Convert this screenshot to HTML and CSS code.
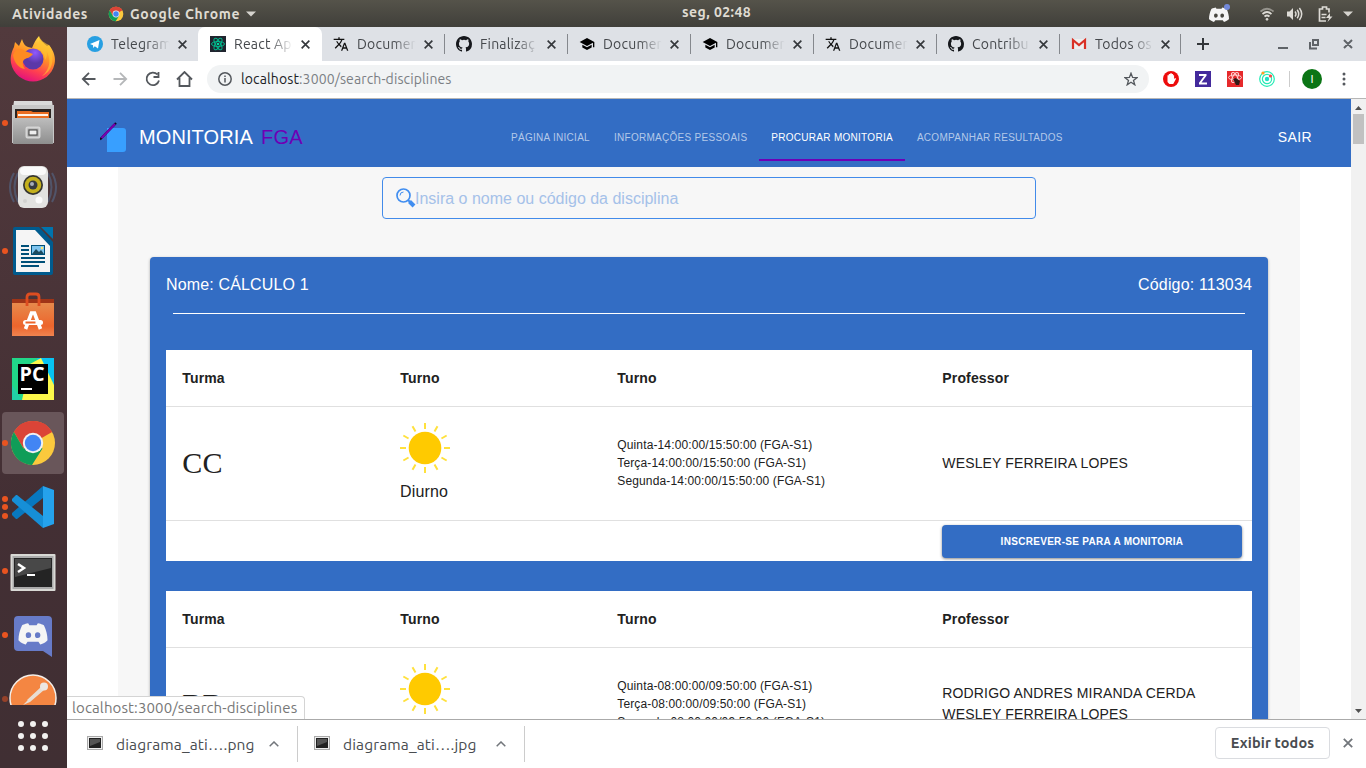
FILE: index.html
```html
<!DOCTYPE html>
<html lang="pt-BR">
<head>
<meta charset="utf-8">
<title>Monitoria FGA</title>
<link rel="stylesheet" href="styles.css">
</head>
<body>
<svg width="0" height="0" class="defs">
  <symbol id="chrome" viewBox="0 0 48 48">
    <circle cx="24" cy="24" r="22" fill="#fbc93d"/>
    <path d="M24 24 4.900 13A22 22 0 0 1 43.100 13Z" fill="#db4437"/>
    <path d="M24 13H43.100A22 22 0 0 0 4.900 13L14.500 29.500Z" fill="#db4437"/>
    <path d="M4.900 13A22 22 0 0 0 23 46L33.500 29.500 24 24 14.500 29.500Z" fill="#0f9d58"/>
    <circle cx="24" cy="24" r="10.200" fill="#f1f1f1"/><circle cx="24" cy="24" r="8.200" fill="#4285f4"/>
  </symbol>
  <symbol id="close" viewBox="0 0 10 10"><path d="M1.500 1.500 8.500 8.500M8.500 1.500 1.500 8.500" stroke="currentColor" stroke-width="1.500"/></symbol>
  <symbol id="translate" viewBox="0 0 24 24"><path fill="#111" d="M12.870 15.070l-2.540-2.510.030-.030A17.520 17.520 0 0 0 14.070 6H17V4h-7V2H8v2H1v2h11.170C11.500 7.920 10.440 9.750 9 11.350 8.070 10.320 7.300 9.190 6.690 8h-2c.730 1.630 1.730 3.170 2.980 4.560l-5.090 5.020L4 19l5-5 3.110 3.110zM18.500 10h-2L12 22h2l1.120-3h4.750L21 22h2zm-2.620 7l1.620-4.330L19.120 17z"/></symbol>
  <symbol id="github" viewBox="0 0 16 16"><path fill="#16181c" d="M8 0C3.580 0 0 3.580 0 8c0 3.540 2.290 6.530 5.470 7.590.4.070.550-.170.550-.380v-1.490c-2.010.370-2.530-.490-2.690-.940-.090-.230-.480-.940-.820-1.130-.280-.150-.680-.520-.010-.530.630-.010 1.080.580 1.230.820.720 1.210 1.870.870 2.330.660.070-.520.280-.870.510-1.070-1.780-.200-3.640-.890-3.640-3.950 0-.870.310-1.590.820-2.150-.080-.200-.360-1.020.080-2.120 0 0 .670-.210 2.200.820a7.600 7.600 0 0 1 4 0c1.530-1.040 2.200-.820 2.200-.820.440 1.100.160 1.920.080 2.120.510.560.820 1.270.820 2.150 0 3.070-1.870 3.750-3.650 3.950.290.250.540.730.540 1.480v2.200c0 .210.150.460.550.380A8.010 8.010 0 0 0 16 8c0-4.420-3.580-8-8-8z"/></symbol>
  <symbol id="school" viewBox="0 0 24 24"><path fill="#000" d="M5 13.180v4L12 21l7-3.820v-4L12 17zM12 3 1 9l11 6 9-4.910V17h2V9z"/></symbol>
  <symbol id="discord" viewBox="0 0 24 19"><path fill="#f5f5f5" fill-rule="evenodd" d="M8 1C5 1.500 3 2.600 3 2.600 1 6.500 0 11 0 15c2 2.500 6 3.500 6 3.500l1.500-2.200h9L18 18.500s4-1 6-3.500c0-4-1-8.500-3-12.400C21 2.600 19 1.500 16 1l-1 1.700H9zM8.200 8.400a2.200 2.400 0 1 0 .1 4.900 2.200 2.400 0 0 0-.1-4.900zm7.600 0a2.200 2.400 0 1 0 .1 4.900 2.200 2.400 0 0 0-.1-4.900z"/></symbol>
  <symbol id="sun" viewBox="0 0 50 50"><circle cx="25" cy="25" r="16.300" fill="#ffca00"/>
    <g stroke="#ffe13d" stroke-width="2"><path id="ray" d="M25 0v6M25 44v6"/><use href="#ray" transform="rotate(30 25 25)"/><use href="#ray" transform="rotate(60 25 25)"/><use href="#ray" transform="rotate(90 25 25)"/><use href="#ray" transform="rotate(120 25 25)"/><use href="#ray" transform="rotate(150 25 25)"/></g></symbol>
  <symbol id="thumb" viewBox="0 0 16 14"><rect x=".5" y=".5" width="15" height="13" fill="#eee" stroke="#aaa"/><rect x="2" y="2" width="12" height="10" fill="#222"/><path d="M3 3h10v3L3 10z" fill="#555"/></symbol>
  <symbol id="chev" viewBox="0 0 10 6"><path d="M.700 5.300 5 1l4.300 4.300" fill="none" stroke="#72767b" stroke-width="1.500"/></symbol>
</svg>

<header class="topbar">
  <span class="activities">Atividades</span>
  <svg class="i16" ><use href="#chrome"/></svg>
  <span class="appname">Google Chrome</span>
  <svg width="10" height="6"><path d="M0 .500H10L5 5.500z" fill="#d5d3ce"/></svg>
  <span class="clock">seg, 02:48</span>
  <div class="tray">
    <svg width="22" height="20" viewBox="0 0 22 20"><use href="#discord" x="0" y="3.500" width="20" height="16"/><circle cx="18" cy="4" r="3" fill="#7289da"/></svg>
    <svg class="wifi" width="14" height="14" viewBox="0 0 14 14" fill="none" stroke="#dddbd6" stroke-width="1.700"><path d="M.500 4.500Q7-1 13.500 4.500" opacity=".5"/><path d="M2.500 7Q7 3 11.500 7M4.500 9.500Q7 7.500 9.500 9.500"/><circle cx="7" cy="12.300" r="1" fill="#dddbd6" stroke-width=".8"/></svg>
    <svg class="vol" width="16" height="14" viewBox="0 0 16 14" fill="none" stroke="#dddbd6" stroke-width="1.500"><path d="M0 4.500h2.500L6 1v12L2.500 9.500H0z" fill="#dddbd6" stroke="none"/><path d="M8 4.500Q10 7 8 9.500M10.200 2.800Q13.200 7 10.200 11.200M12.400 1Q17 7 12.400 13"/></svg>
    <svg class="bat" width="15" height="16" viewBox="0 0 15 16" fill="none" stroke="#dddbd6" stroke-width="1.700"><path d="M11 6.500V3H8.500V1h-4v2H1.500v12H8M3.500 8.500h5M3.500 11.500h4"/><path d="m12 7-4 5h3l-1.500 4 5-5.500H12z" fill="#dddbd6" stroke="none"/></svg>
    <svg width="10" height="6"><path d="M0 .500H10L5 5.500z" fill="#d5d3ce"/></svg>
  </div>
</header>

<div class="desktop">
<aside class="dock">
  <div class="app"><svg viewBox="0 0 48 48">
    <defs><linearGradient id="ff" x1=".8" y1="0" x2=".4" y2="1"><stop offset="0" stop-color="#ffe84a"/><stop offset=".45" stop-color="#ff9326"/><stop offset=".75" stop-color="#ff4050"/><stop offset="1" stop-color="#e3127c"/></linearGradient><radialGradient id="fp" cx=".6" cy=".2"><stop offset="0" stop-color="#9059ff"/><stop offset="1" stop-color="#5b38a8"/></radialGradient></defs>
    <path d="M30 1c1 5 5 7 8 10l2-1c5 6 7 13 5.500 19C43 40 34 46.500 24 46.500S4 39 2 28c-1-7 1-12 3-16l1-5 4 4 3-7c1 4 3 7 6 8l4 1c2-5 4-9 7-12z" fill="url(#ff)"/>
    <circle cx="24" cy="24" r="10.500" fill="url(#fp)"/><path d="M4 20c3-7 7-8 12-4l8 3c-3 4-6 4-8 5-3 2-3 6 0 10-7-1-11-7-12-14z" fill="#ff8b22"/><path d="M30 1c2 10-5 10-6 12 7 0 12 5 12 12 3-4 2-8 1-10 5 8 5 19-4 26 10-4 14-17 7-31-4-2-8-4-10-9z" fill="#ffc330" opacity=".65"/></svg></div>
  <div class="app"><i></i><svg viewBox="0 0 48 48"><defs><linearGradient id="gr" x2="0" y2="1"><stop stop-color="#bdbdbd"/><stop offset="1" stop-color="#8e8e8e"/></linearGradient></defs><path d="M5 2h38l2 14H3z" fill="#dadada"/><path d="M3 6h42v38H3z" fill="#c7c7c7"/><path d="M6 10h36v10H6z" fill="#2b2421"/><path d="M8 12h14l2 1h16v7H8z" fill="#ea6d22"/><path d="M9 15h30v2H9z" fill="#fff3e8"/><path d="M4 19h40v26H4z" fill="url(#gr)"/><rect x="17.500" y="28.500" width="13" height="10" rx="1" fill="none" stroke="#d5d5d5" stroke-width="2"/><rect x="20" y="31" width="8" height="5" fill="#eee" stroke="#444"/></svg></div>
  <div class="app"><svg viewBox="0 0 48 48"><g fill="none" stroke="#52617e" stroke-width="2" opacity=".7"><path d="M5 10Q-3 24 5 39M43 10Q51 24 43 39M9 10Q2 24 9 39M39 10Q46 24 39 39"/></g><rect x="9" y="3" width="30" height="42" rx="6" fill="#e2e2e0"/><rect x="11" y="4" width="26" height="8" rx="4" fill="#fafafa"/><circle cx="24" cy="22" r="10" fill="#353530"/><circle cx="24" cy="22" r="8.300" fill="#c4b01d"/><circle cx="24" cy="22" r="4.500" fill="#343941"/><circle cx="23" cy="21" r="2" fill="#a5adba"/><circle cx="30" cy="37" r="3.500" fill="#fafafa"/><circle cx="16" cy="38" r="2" fill="#d2d2d0"/></svg></div>
  <div class="app"><i></i><svg viewBox="0 0 48 48"><path d="M6 0h24l14 15v31q0 2-2 2H6q-2 0-2-2V2q0-2 2-2z" fill="#005b8e"/><path d="M7 3h19l15 16v26H7z" fill="#f5f5f5"/><path d="M32 0h12v12z" fill="#0074ad"/><path d="M12 18h8v2h-8zm0 4h8v2h-8zm0 4h8v2h-8zm0 4h24v2H12zm0 4h24v2H12zm0 4h18v2H12z" fill="#005078"/><path d="M22 18h14v10H22z" fill="#005078"/><path d="M23 19h12v8H23z" fill="#7ec4ee"/><path d="m23 27 4-5 3 3 2-2 3 4z" fill="#1d4b5f"/><circle cx="33" cy="21" r="1.200" fill="#ffe76b"/></svg></div>
  <div class="app"><svg viewBox="0 0 48 48"><defs><linearGradient id="bag" x2="0" y2="1"><stop stop-color="#e68a4c"/><stop offset=".7" stop-color="#ed652c"/><stop offset="1" stop-color="#f08450"/></linearGradient></defs><path d="M3 8h42v12H3z" fill="#9f3417"/><path d="M3 12h42v33H3z" fill="url(#bag)"/><path d="M18 15V6q0-3 3-3h6q3 0 3 3v9" fill="none" stroke="#dd4d20" stroke-width="2.800"/><path d="M16.500 38 22.500 22h3l6 16" fill="none" stroke="#fff" stroke-width="3.600"/><rect x="14" y="29" width="20" height="5" rx="2.500" fill="#fff"/><path d="M16.500 31.500h10" stroke="#ed652c" stroke-width="2"/></svg></div>
  <div class="app"><svg viewBox="0 0 48 48"><path d="M3 3h42v42H3z" fill="#21d789"/><path d="M28 3h17v31L32 20z" fill="#07c3f2"/><path d="M21 9 32 3l13 27v15H13z" fill="#fcf84a"/><path d="M3 30 13 45H3z" fill="#21cfa8"/><path d="M9 9h30v30H9z" fill="#000"/><path d="M12 33h11v2H12z" fill="#fff"/><text x="10.500" y="26" class="pc" textLength="25" lengthAdjust="spacingAndGlyphs">PC</text></svg></div>
  <div class="app on"><i></i><svg viewBox="0 0 48 48"><use href="#chrome" width="48" height="48"/></svg></div>
  <div class="app"><b><i></i><i></i><i></i></b><svg viewBox="0 0 48 48"><path d="m34 3 11 4v34l-11 4z" fill="#25a2ec"/><path d="M34 3v12L8 36H7l-4-4v-2z" fill="#0878bf"/><path d="M34 45V33L8 12H7l-4 4v2z" fill="#168fd7"/></svg></div>
  <div class="app"><i></i><svg viewBox="0 0 48 48"><rect x="1.500" y="7" width="45" height="37" rx="1" fill="#d9d9d5"/><rect x="3.500" y="9" width="41" height="33" fill="#aaa"/><path d="M5 11h38v29H5z" fill="#242424"/><path d="M6 12h36v9L6 30z" fill="#484848"/><path d="m9 17 6 4-6 4" fill="none" stroke="#fff" stroke-width="2.500"/><path d="M18 27h8v2h-8z" fill="#fff"/></svg></div>
  <div class="app"><i></i><svg viewBox="0 0 48 48"><path d="M9 5h30q4 0 4 4v37l-9-6H9q-4 0-4-4V9q0-4 4-4z" fill="#677bc8"/><use href="#discord" x="9" y="11" width="30" height="23"/></svg></div>
  <div class="app cut"><i></i><svg viewBox="0 0 48 48"><circle cx="24" cy="24" r="23" fill="#f48642" stroke="#f3eee9" stroke-width="1.500"/><path d="m18 26 14-13 3 3-14 12zM14 31l5-5 2 2z" fill="#e8ddd2"/><circle cx="35" cy="12.500" r="4" fill="#ece6e1"/></svg></div>
  <svg class="grid" width="30" height="30" viewBox="0 0 30 30" fill="none" stroke="#f2f1f0" stroke-width="6" stroke-linecap="round"><path d="M3 3h0M15 3h0M27 3h0M3 15h0M15 15h0M27 15h0M3 27h0M15 27h0M27 27h0"/></svg>
</aside>

<main class="window">
  <nav class="tabs">
    <div class="tab"><svg class="fav" viewBox="0 0 16 16"><circle cx="8" cy="8" r="8" fill="#279fe2"/><path d="m3 8 9.500-4L11 12.500 7.800 10.200 6.200 12 6 9.200z" fill="#fff"/></svg><span>Telegram</span><svg class="x"><use href="#close"/></svg></div>
    <div class="tab active"><svg class="fav" viewBox="0 0 16 16"><path d="M0 0h16v16H0z" fill="#20252f"/><g fill="none" stroke="#00b98c"><ellipse cx="8" cy="8" rx="6.500" ry="2.500"/><ellipse cx="8" cy="8" rx="6.500" ry="2.500" transform="rotate(60 8 8)"/><ellipse cx="8" cy="8" rx="6.500" ry="2.500" transform="rotate(120 8 8)"/></g><circle cx="8" cy="8" r="1.300" fill="#00d8a0"/></svg><span>React Ap</span><svg class="x"><use href="#close"/></svg></div>
    <div class="tab"><svg class="fav"><use href="#translate"/></svg><span>Documen</span><svg class="x"><use href="#close"/></svg></div>
    <div class="tab sep"><svg class="fav"><use href="#github"/></svg><span>Finalizaç</span><svg class="x"><use href="#close"/></svg></div>
    <div class="tab sep"><svg class="fav"><use href="#school"/></svg><span>Documen</span><svg class="x"><use href="#close"/></svg></div>
    <div class="tab sep"><svg class="fav"><use href="#school"/></svg><span>Documen</span><svg class="x"><use href="#close"/></svg></div>
    <div class="tab sep"><svg class="fav"><use href="#translate"/></svg><span>Documen</span><svg class="x"><use href="#close"/></svg></div>
    <div class="tab sep"><svg class="fav"><use href="#github"/></svg><span>Contribu</span><svg class="x"><use href="#close"/></svg></div>
    <div class="tab sep last"><svg class="fav" viewBox="0 0 16 16"><path d="M2 3h12v10H2z" fill="#eee"/><path d="M2 13V4l6 5 6-5v9" fill="none" stroke="#d93025" stroke-width="2.200"/></svg><span>Todos os</span><svg class="x"><use href="#close"/></svg></div>
    <svg class="plus" width="12" height="12"><path d="M6 0v12M0 6h12" stroke="#33363a" stroke-width="2"/></svg>
    <svg class="wins" width="76" height="12" fill="none" stroke="#5f6368" stroke-width="2"><path d="M0 10h10M35 2h5v5h-5zM32 4v6.500h7M66 2l8 8M74 2l-8 8"/></svg>
  </nav>
  <div class="toolbar">
    <svg class="navs" width="112" height="16" viewBox="0 0 112 16" fill="none" stroke="#54585d" stroke-width="1.800"><path d="M14.500 8H2M8 1.800 1.800 8 8 14.200"/><path d="M32.500 8H45M39 1.800 45.200 8 39 14.200" stroke="#b5b7b9"/><path d="M76.500 3.500A6.300 6.300 0 1 0 78 9.500M77.500 1v5h-5"/><path d="M96 8.500 103.500 1 111 8.500M98.500 7v8h10V7"/></svg>
    <div class="omnibox">
      <svg width="14" height="14" viewBox="0 0 14 14" fill="none" stroke="#54585d" stroke-width="1.500"><circle cx="7" cy="7" r="6.200"/><path d="M7 6v4.500M7 3.500V5"/></svg>
      <span class="url"><em>localhost</em>:3000/search-disciplines</span>
      <svg class="star" width="14" height="14" viewBox="0 0 14 14"><path d="m7 1.200 1.600 4.200 4.400.2-3.500 2.800 1.300 4.400L7 10.300l-3.800 2.500 1.300-4.400L1 5.600l4.400-.2z" fill="none" stroke="#54585d" stroke-width="1.300"/></svg>
    </div>
    <div class="exts">
      <svg class="i16" viewBox="0 0 16 16"><circle cx="8" cy="8" r="8" fill="#ed0c0c"/><path d="M4.500 8V4.200h1.300V3h1.500v-.8h1.500V3h1.300v1.200h1V8l1-1 1 .8L10.200 13H6.300L4.500 11z" fill="#fff"/></svg>
      <svg class="i16" viewBox="0 0 16 16"><path d="M0 0h16v16H0z" fill="#432a9c"/><path d="M4 4h7.500M4 12.500h8M10.500 4.500 5 12" fill="none" stroke="#fff" stroke-width="1.900"/></svg>
      <svg class="i16" viewBox="0 0 16 16"><path d="M0 0h16v16H0z" fill="#e6292b"/><g fill="none" stroke="#ffd3d0"><ellipse cx="8" cy="6.500" rx="6.500" ry="2.500"/><ellipse cx="8" cy="6.500" rx="5.500" ry="2.300" transform="rotate(60 8 6.500)"/><ellipse cx="8" cy="6.500" rx="5.500" ry="2.300" transform="rotate(120 8 6.500)"/></g><path d="m6 8 3-1 4 3-1 4H9z" fill="#321a17"/></svg>
      <svg class="i16" viewBox="0 0 16 16"><g fill="none" stroke="#24ebb5" stroke-width="1.200"><circle cx="8" cy="8" r="7.300"/><circle cx="8" cy="8" r="4.600"/></g><circle cx="8" cy="8" r="2.200" fill="#20dfc2"/><circle cx="4" cy="2" r="1.600" fill="#ff9f23"/><circle cx="11.500" cy="5" r="1.600" fill="#f44"/></svg>
      <u></u><div class="avatar">I</div>
      <svg width="4" height="14" fill="#54585d"><circle cx="2" cy="2" r="1.500"/><circle cx="2" cy="7" r="1.500"/><circle cx="2" cy="12" r="1.500"/></svg>
    </div>
  </div>
  <div class="viewport">
    <div class="page">
      <div class="navbar">
        <svg class="logo" width="30" height="32" viewBox="0 0 30 32"><path d="M7 7h16q3 0 3 3v18q0 3-3 3H7z" fill="#389fff"/><path d="M0 18.500 16 2" stroke="#140025" stroke-width="2.200"/><path d="M1.500 17 15 3" stroke="#7700b0" stroke-width="2.200"/></svg>
        <span class="brand">MONITORIA</span><span class="fga">FGA</span>
        <div class="links"><a>PÁGINA INICIAL</a><a>INFORMAÇÕES PESSOAIS</a><a class="current">PROCURAR MONITORIA</a><a>ACOMPANHAR RESULTADOS</a></div>
        <span class="exit">SAIR</span>
      </div>
      <div class="container">
        <div class="search"><svg width="20" height="20" viewBox="0 0 20 20" fill="none" stroke="#418ef0"><circle cx="7.500" cy="7.500" r="6.500" stroke-width="1.700"/><path d="M4 7.500A3.500 3.500 0 0 1 7.500 4"/><path d="m12 12 2 2" stroke-width="2"/><path d="m13.500 13.500 4.500 4.500" stroke-width="4"/></svg><span>Insira o nome ou código da disciplina</span></div>
        <section class="card">
          <div class="cardhead"><span>Nome: CÁLCULO 1</span><span>Código: 113034</span></div>
          <div class="rule"></div>
          <div class="table">
            <div class="row head"><div>Turma</div><div>Turno</div><div>Turno</div><div>Professor</div></div>
            <div class="row body"><div class="class">CC</div><div class="shift"><svg width="50" height="50"><use href="#sun"/></svg>Diurno</div><div class="times">Quinta-14:00:00/15:50:00 (FGA-S1)<br>Terça-14:00:00/15:50:00 (FGA-S1)<br>Segunda-14:00:00/15:50:00 (FGA-S1)</div><div>WESLEY FERREIRA LOPES</div></div>
            <div class="action"><div class="button">INSCREVER-SE PARA A MONITORIA</div></div>
          </div>
          <div class="table">
            <div class="row head"><div>Turma</div><div>Turno</div><div>Turno</div><div>Professor</div></div>
            <div class="row body"><div class="class">BB</div><div class="shift"><svg width="50" height="50"><use href="#sun"/></svg></div><div class="times">Quinta-08:00:00/09:50:00 (FGA-S1)<br>Terça-08:00:00/09:50:00 (FGA-S1)<br>Segunda-08:00:00/09:50:00 (FGA-S1)</div><div class="names">RODRIGO ANDRES MIRANDA CERDA<br>WESLEY FERREIRA LOPES</div></div>
          </div>
        </section>
      </div>
    </div>
    <div class="scroll"><svg width="7" height="4"><path d="M0 4 3.500 0 7 4z" fill="#505050"/></svg><div class="handle"></div><svg class="down" width="7" height="4"><path d="M0 0H7L3.500 4z" fill="#505050"/></svg></div>
    <div class="status">localhost:3000/search-disciplines</div>
  </div>
  <footer class="downloads">
    <div class="file"><svg width="16" height="14"><use href="#thumb"/></svg><span>diagrama_ati….png</span><svg width="10" height="6"><use href="#chev"/></svg></div>
    <div class="file"><svg width="16" height="14"><use href="#thumb"/></svg><span>diagrama_ati….jpg</span><svg width="10" height="6"><use href="#chev"/></svg></div>
    <div class="showall">Exibir todos</div>
    <svg class="dx" width="12" height="12"><use href="#close"/></svg>
  </footer>
</main>
</div>
</body>
</html>
```
FILE: styles.css
```css
* { box-sizing: border-box; }
body { margin: 0; width: 1366px; height: 768px; overflow: hidden; font-family: "Liberation Sans", Arial, sans-serif; }
svg { display: block; flex: none; }
.defs { position: absolute; }
.i16 { width: 16px; height: 16px; }
.topbar, .tabs, .url, .status, .downloads { font-family: Ubuntu, "Noto Sans", sans-serif; white-space: nowrap; }

.topbar { height: 27px; position: relative; display: flex; align-items: center; padding-left: 12px; background: linear-gradient(#55534a, #403f3a); color: #dfdbd2; font-size: 14px; font-weight: 600; }
.activities { width: 76px; margin-right: 20px; letter-spacing: .6px; }
.appname { width: 111px; margin: 0 5px 0 6px; letter-spacing: .65px; }
.clock { position: absolute; left: 682px; top: 4px; letter-spacing: .45px; }
.tray { margin-left: auto; width: 157px; height: 27px; display: flex; align-items: center; }
.tray > svg:first-child { margin-top: -1px; }
.wifi { margin-left: 29px; }
.vol { margin-left: 13px; }
.bat { margin: 0 10px 0 15px; }

.desktop { display: flex; height: 741px; }
.dock { width: 67px; background: linear-gradient(#523a3d, #432f34 65%, #402f33); }
.app { height: 64px; display: flex; align-items: center; justify-content: center; position: relative; padding-right: 1px; }
.app svg { width: 48px; height: 48px; }
.app i { position: absolute; left: 2px; width: 6px; height: 6px; border-radius: 50%; background: #e95420; }
.app b { position: absolute; left: 0; height: 23px; width: 8px; display: flex; flex-direction: column; justify-content: space-between; }
.app b i { position: static; margin-left: 2px; }
.app.on { height: 62px; margin: 1px 3px 1px 2px; padding: 0; border-radius: 4px; background: #69565a; }
.app.on i { left: 0; }
.app.cut { height: 38px; align-items: flex-start; padding-top: 7px; overflow: hidden; }
.app.cut i { top: 29px; opacity: .5; }
.pc { font: bold 19px "Open Sans", sans-serif; fill: #fff; }
.grid { margin: 16px 0 0 18px; }

.window { width: 1299px; background: #fff; display: flex; flex-direction: column; }
.tabs { height: 34px; background: #dee1e6; padding-left: 8px; display: flex; align-items: center; color: #45484c; }
.tab { width: 123px; height: 34px; padding-left: 12px; display: flex; align-items: center; position: relative; flex: none; }
.fav { width: 16px; height: 16px; margin-right: 8px; }
.tab span { width: 60px; overflow: hidden; font-size: 14px; letter-spacing: .2px; -webkit-mask-image: linear-gradient(90deg, #000 60%, transparent 98%); mask-image: linear-gradient(90deg, #000 60%, transparent 98%); }
.x { width: 11px; height: 11px; margin-left: 6px; color: #35383c; }
.active { background: #fff; border-radius: 7px 7px 0 0; width: 124px; margin-right: -1px; }
.sep::before { content: ""; position: absolute; left: 0; top: 7px; width: 1px; height: 20px; background: #85888d; }
.last .x { margin-left: 5px; }
.last::after { content: ""; position: absolute; right: 1px; top: 7px; width: 1px; height: 20px; background: #85888d; }
.plus { margin-left: 15px; }
.wins { margin-left: 69px; }
.toolbar { height: 38px; border-bottom: 1px solid #b6b6b6; display: flex; align-items: center; padding: 0 0 1px 14px; }
.omnibox { width: 942px; height: 28px; margin-left: 14px; border-radius: 14px; background: #f1f3f4; display: flex; align-items: center; padding: 0 11px; }
.url { margin: -1px 0 0 9px; font-size: 14px; letter-spacing: .12px; color: #7b7f84; }
.url em { font-style: normal; color: #202124; }
.star { margin-left: auto; }
.exts { display: flex; align-items: center; gap: 16px; margin-left: 14px; }
.exts u { width: 1px; height: 16px; background: #ccc; margin: 0 -4px 0 -2px; }
.avatar { width: 20px; height: 20px; border-radius: 50%; background: #0b7515; color: #fff; text-align: center; font-size: 11px; line-height: 20px; margin-right: 4px; }

.viewport { height: 620px; display: flex; overflow: hidden; position: relative; }
.page { width: 1284px; }
.navbar { height: 68px; background: #336dc4; color: #fff; display: flex; align-items: center; padding: 8px 39px 0 33px; }
.brand { font-size: 20px; margin: 1px 0 0 9px; width: 122px; white-space: nowrap; letter-spacing: .1px; }
.fga { font-size: 20px; margin-top: 1px; color: #6e00b5; width: 60px; letter-spacing: .2px; }
.links { display: flex; height: 48px; margin-left: 178px; font-size: 10px; letter-spacing: .28px; color: #b4c9e9; }
.links a { padding: 0 12px; line-height: 49px; white-space: nowrap; }
.links .current { color: #fff; box-shadow: inset 0 -2px #6d00b7; }
.exit { margin-left: auto; font-size: 14px; letter-spacing: .4px; }
.container { width: 1182px; height: 552px; margin: 0 auto; padding: 10px 32px 0; background: #f7f7f7; }
.search { width: 654px; height: 42px; margin-left: 232px; border: 1px solid #428bea; border-radius: 4px; display: flex; align-items: center; padding-left: 13px; color: #a5c1e9; font-size: 16px; }
.search span { margin: 2px 0 0 -1px; }
.card { height: 720px; margin-top: 38px; padding: 0 16px; background: #336dc4; border-radius: 4px; box-shadow: 0 1px 3px #0005; }
.cardhead { height: 56px; display: flex; justify-content: space-between; line-height: 55px; color: #fff; font-size: 16px; letter-spacing: .15px; }
.rule { height: 1px; margin: 0 7px 36px; background: #fff; }
.table { background: #fff; margin-bottom: 30px; color: #212121; }
.row { display: grid; grid-template-columns: 218px 217px 325px 326px; align-items: center; border-bottom: 1px solid #e0e0e0; font-size: 14px; letter-spacing: .15px; line-height: 21px; }
.row > div { padding-left: 16.3px; }
.head { height: 57px; font-weight: bold; }
.body { height: 114px; }
.row .class { font-family: "Liberation Serif", serif; font-size: 30px; padding-bottom: 3px; letter-spacing: .2px; }
.row .shift { height: 82px; padding-left: 16px; font-size: 16px; line-height: 20px; }
.shift svg { margin-bottom: 9px; }
.row .times { font-size: 12px; letter-spacing: .13px; line-height: 18px; padding-bottom: 1px; }
.row .names { padding-bottom: 2px; }
.action { height: 40px; padding: 4px 10px 0 776px; }
.button { height: 33px; background: #336dc4; border-radius: 4px; box-shadow: 0 1px 3px #0007; color: #fff; text-align: center; line-height: 33px; font-size: 10px; font-weight: bold; letter-spacing: .3px; }
.scroll { width: 15px; background: #f1f1f1; display: flex; flex-direction: column; align-items: center; padding: 7px 0 6px; }
.handle { width: 11px; height: 30px; margin-top: 4px; background: #c1c1c1; }
.down { margin-top: auto; }
.status { position: absolute; left: -1px; bottom: 0; width: 239px; height: 23px; padding-left: 5px; border: 1px solid #d4d4d4; border-bottom: 0; border-radius: 0 4px 0 0; background: #fff; color: #777; font-size: 15px; letter-spacing: .12px; line-height: 21px; }
.downloads { height: 49px; border-top: 1px solid #aaa; display: flex; align-items: center; color: #494c50; font-size: 15.5px; letter-spacing: .13px; }
.file { width: 227px; height: 36px; padding-left: 16px; border-right: 1px solid #ccc; display: flex; align-items: center; }
.file:first-child { width: 231px; padding-left: 20px; }
.file svg:first-child { margin-top: -3px; }
.file span { margin: 0 14px 0 13px; width: 139px; }
.showall { width: 115px; height: 32px; margin: -3px 12px 0 auto; border: 1px solid #dadce0; border-radius: 4px; text-align: center; line-height: 29px; font-size: 14.5px; font-weight: 600; }
.dx { margin: -3px 12px 0 0; color: #72767b; }
```
